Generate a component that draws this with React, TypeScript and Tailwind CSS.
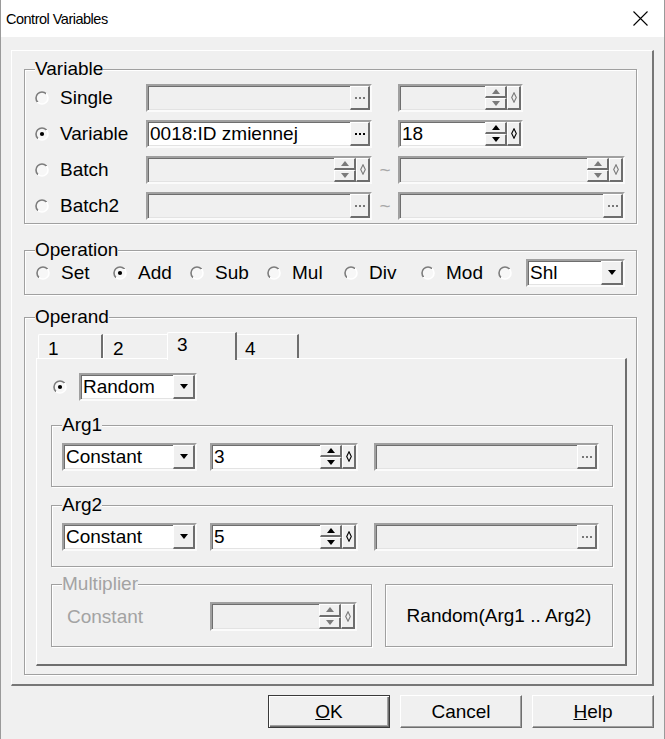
import React from 'react'

const raised =
  'border-t border-l border-t-white border-l-white border-r-2 border-b-2 border-r-[#6e6e6e] border-b-[#6e6e6e] bg-[#f0f0f0]'
const sunken =
  'border-2 border-t-[#a0a0a0] border-l-[#a0a0a0] border-r-[#fbfbfb] border-b-[#fbfbfb] shadow-[inset_1px_1px_0_#6e6e6e,inset_-1px_-1px_0_#e3e3e3]'
const etched = 'border border-[#a0a0a0] shadow-[inset_1px_1px_0_#fff,1px_1px_0_#fff]'

function Radio({ checked = false }: { checked?: boolean }) {
  return (
    <svg width="14" height="14" viewBox="0 0 14 14" className="shrink-0">
      <defs>
        <linearGradient id="radio-edge" x1="0" y1="0" x2="1" y2="1">
          <stop offset="0.5" stopColor="#7c7c7c" />
          <stop offset="0.5" stopColor="#ffffff" />
        </linearGradient>
      </defs>
      <circle cx="7" cy="7" r="6" fill="#f7f7f7" stroke="url(#radio-edge)" strokeWidth="1.6" />
      {checked && <circle cx="7" cy="7" r="2.1" fill="#000" />}
    </svg>
  )
}

function Dots({ on = false }: { on?: boolean }) {
  const c = on ? '#000' : '#777'
  return (
    <div className={`flex w-[20px] shrink-0 items-center justify-center ${raised}`}>
      <svg width="10" height="2">
        <rect x="0" width="2" height="2" fill={c} />
        <rect x="4" width="2" height="2" fill={c} />
        <rect x="8" width="2" height="2" fill={c} />
      </svg>
    </div>
  )
}

function Spin({ on = false }: { on?: boolean }) {
  const c = on ? '#000' : '#7a7a7a'
  return (
    <div className="flex shrink-0">
      <div className="flex w-[22px] flex-col">
        <div className={`flex flex-1 items-center justify-center ${raised}`}>
          <svg width="8" height="5">
            <path d="M4 0L8 5H0Z" fill={c} />
          </svg>
        </div>
        <div className={`flex flex-1 items-center justify-center ${raised}`}>
          <svg width="8" height="5">
            <path d="M0 0H8L4 5Z" fill={c} />
          </svg>
        </div>
      </div>
      <div className={`flex w-[14px] items-center justify-center ${raised}`}>
        <svg width="6" height="11">
          <path d="M3 0.8L5.3 5.5L3 10.2L0.7 5.5Z" fill="none" stroke={c} strokeWidth="1.1" />
        </svg>
      </div>
    </div>
  )
}

function Field({
  className = '',
  value = '',
  on = false,
  children,
}: {
  className?: string
  value?: string
  on?: boolean
  children?: React.ReactNode
}) {
  return (
    <div className={`flex h-[28px] shrink-0 ${sunken} ${on ? 'bg-white' : 'bg-[#f0f0f0]'} ${className}`}>
      <span className="flex flex-1 items-center overflow-hidden pl-[2px] whitespace-nowrap">{value}</span>
      {children}
    </div>
  )
}

function Combo({ className = '', value }: { className?: string; value: string }) {
  return (
    <div className={`flex h-[28px] shrink-0 bg-white ${sunken} ${className}`}>
      <span className="flex flex-1 items-center pl-[2px]">{value}</span>
      <div className={`flex w-[22px] items-center justify-center ${raised}`}>
        <svg width="8" height="5">
          <path d="M0 0H8L4 5Z" fill="#000" />
        </svg>
      </div>
    </div>
  )
}

function Group({
  label,
  className = '',
  muted = false,
  children,
}: {
  label: string
  className?: string
  muted?: boolean
  children: React.ReactNode
}) {
  return (
    <fieldset className={`${etched} ${className}`}>
      <legend className={`ml-[10px] bg-[#f0f0f0] leading-[22px] ${muted ? 'text-[#a3a3a3]' : ''}`}>{label}</legend>
      {children}
    </fieldset>
  )
}

function Choice({ label, checked = false, className = '' }: { label: string; checked?: boolean; className?: string }) {
  return (
    <label className={`flex items-center gap-[11px] ${className}`}>
      <Radio checked={checked} />
      {label}
    </label>
  )
}

const Tilde = () => <span className="w-[26px] shrink-0 text-center text-[#a8a8a8]">~</span>
const Gap = () => <span className="w-[26px] shrink-0" />

function Tab({ label, active = false, className = '' }: { label: string; active?: boolean; className?: string }) {
  return (
    <div
      className={`flex items-start pl-[9px] border-t border-l border-t-white border-l-white border-r-2 border-r-[#6e6e6e] rounded-tl-[2px] ${
        active ? 'relative z-10 -mx-[2px] -mb-[2px] h-[28px] bg-[#f0f0f0] pt-[1px]' : 'h-[24px] pt-[3px]'
      } ${className}`}
    >
      {label}
    </div>
  )
}

function Button({ children, primary = false }: { children: React.ReactNode; primary?: boolean }) {
  return (
    <button
      className={`flex h-[33px] w-[122px] items-center justify-center bg-[#f0f0f0] ${
        primary
          ? 'border border-[#3a3a3a] shadow-[inset_1px_1px_0_#fff,inset_-1px_-1px_0_#6e6e6e,inset_-2px_-2px_0_#a0a0a0]'
          : 'border-t border-l border-t-white border-l-white border-r border-b border-r-[#6e6e6e] border-b-[#6e6e6e] shadow-[inset_-1px_-1px_0_#a0a0a0]'
      }`}
    >
      {children}
    </button>
  )
}

export default function App() {
  return (
    <div className="h-[739px] w-[665px] overflow-hidden border-x border-[#9a9a9a] bg-[#f0f0f0] font-['Liberation_Sans',Arial,sans-serif] text-[19px] leading-[22px] text-black">
      {/* title bar */}
      <div className="flex h-[37px] items-center justify-between bg-white pl-[5px] pr-[16px]">
        <span className="text-[14.5px] tracking-[-0.5px]">Control Variables</span>
        <svg width="15" height="15" viewBox="0 0 15 15">
          <path d="M0.5 0.5L14.5 14.5M14.5 0.5L0.5 14.5" stroke="#000" strokeWidth="1.1" />
        </svg>
      </div>

      <div className="ml-[10px] mt-[13px] flex h-[636px] w-[643px] flex-col border-t border-l border-t-white border-l-white border-r-2 border-b-2 border-r-[#777] border-b-[#777] pl-[12px] pt-[7px]">
        {/* target variable */}
        <Group label="Variable" className="w-[613px]">
          <div className="flex flex-col gap-[8px] pl-[10px] pt-[4px] pb-[3px]">
            <div className="flex h-[28px] items-center">
              <Choice label="Single" className="w-[111px]" />
              <Field className="w-[226px]">
                <Dots />
              </Field>
              <Gap />
              <Field className="w-[125px]">
                <Spin />
              </Field>
            </div>
            <div className="flex h-[28px] items-center">
              <Choice label="Variable" checked className="w-[111px]" />
              <Field className="w-[226px]" value="0018:ID zmiennej" on>
                <Dots on />
              </Field>
              <Gap />
              <Field className="w-[125px]" value="18" on>
                <Spin on />
              </Field>
            </div>
            <div className="flex h-[28px] items-center">
              <Choice label="Batch" className="w-[111px]" />
              <Field className="w-[226px]">
                <Spin />
              </Field>
              <Tilde />
              <Field className="w-[227px]">
                <Spin />
              </Field>
            </div>
            <div className="flex h-[28px] items-center">
              <Choice label="Batch2" className="w-[111px]" />
              <Field className="w-[226px]">
                <Dots />
              </Field>
              <Tilde />
              <Field className="w-[227px]">
                <Dots />
              </Field>
            </div>
          </div>
        </Group>

        {/* operation */}
        <Group label="Operation" className="mt-[15px] w-[613px]">
          <div className="-mt-[2px] mb-[7px] flex h-[28px] items-center pl-[11px]">
            <Choice label="Set" className="w-[77px]" />
            <Choice label="Add" checked className="w-[77px]" />
            <Choice label="Sub" className="w-[77px]" />
            <Choice label="Mul" className="w-[77px]" />
            <Choice label="Div" className="w-[77px]" />
            <Choice label="Mod" className="w-[77px]" />
            <Radio />
            <Combo value="Shl" className="ml-[14px] w-[99px]" />
          </div>
        </Group>

        {/* operand */}
        <Group label="Operand" className="mt-[11px] w-[613px]">
          <div className="pl-[11px] pr-[9px] pt-[4px] pb-[8px]">
            <div className="flex h-[26px] items-end pl-[2px]">
              <Tab label="1" className="w-[65px]" />
              <Tab label="2" className="w-[66px]" />
              <Tab label="3" active className="w-[70px]" />
              <Tab label="4" className="w-[64px]" />
            </div>
            <div className="flex h-[308px] flex-col border-t border-l border-t-white border-l-white border-r-2 border-b-2 border-r-[#6e6e6e] border-b-[#6e6e6e] pl-[14px] pt-[14px]">
              <div className="flex items-center">
                <span className="ml-[2px]">
                  <Radio checked />
                </span>
                <Combo value="Random" className="ml-[12px] h-[27px] w-[118px]" />
              </div>

              <Group label="Arg1" className="mt-[13px] w-[562px]">
                <div className="flex items-center pl-[10px] pt-[7px] pb-[15px]">
                  <Combo value="Constant" className="w-[135px]" />
                  <Field className="ml-[13px] w-[148px]" value="3" on>
                    <Spin on />
                  </Field>
                  <Field className="ml-[16px] w-[225px]">
                    <Dots />
                  </Field>
                </div>
              </Group>

              <Group label="Arg2" className="mt-[7px] w-[562px]">
                <div className="flex items-center pl-[10px] pt-[7px] pb-[15px]">
                  <Combo value="Constant" className="w-[135px]" />
                  <Field className="ml-[13px] w-[148px]" value="5" on>
                    <Spin on />
                  </Field>
                  <Field className="ml-[16px] w-[225px]">
                    <Dots />
                  </Field>
                </div>
              </Group>

              <div className="mt-[6px] flex items-start">
                <Group label="Multiplier" muted className="w-[321px]">
                  <div className="flex items-center pl-[15px] pt-[7px] pb-[15px]">
                    <span className="w-[143px] text-[#a3a3a3]">Constant</span>
                    <Field className="h-[29px] w-[147px]">
                      <Spin />
                    </Field>
                  </div>
                </Group>
                <div className={`ml-[13px] mt-[11px] flex h-[63px] w-[228px] items-center justify-center ${etched}`}>
                  Random(Arg1 .. Arg2)
                </div>
              </div>
            </div>
          </div>
        </Group>
      </div>

      {/* dialog buttons */}
      <div className="mt-[9px] flex justify-end gap-[10px] pr-[10px]">
        <Button primary>
          <span>
            <span className="underline">O</span>K
          </span>
        </Button>
        <Button>Cancel</Button>
        <Button>
          <span>
            <span className="underline">H</span>elp
          </span>
        </Button>
      </div>
    </div>
  )
}
